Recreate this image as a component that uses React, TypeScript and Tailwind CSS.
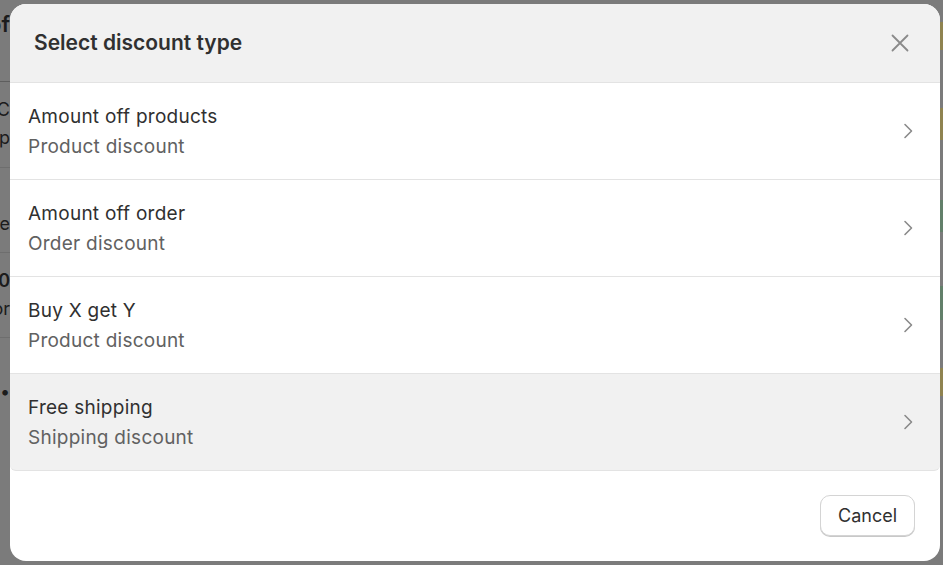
import React from "react";

const rows = [
  { title: "Amount off products", sub: "Product discount", hover: false },
  { title: "Amount off order", sub: "Order discount", hover: false },
  { title: "Buy X get Y", sub: "Product discount", hover: false },
  { title: "Free shipping", sub: "Shipping discount", hover: true },
];

function Chevron() {
  return (
    <svg width="20" height="20" viewBox="0 0 20 20" fill="none">
      <path d="M7 3.5 13.5 10 7 16.5" stroke="#8a8a8a" strokeWidth="1.6" strokeLinecap="round" strokeLinejoin="round" />
    </svg>
  );
}

function CloseIcon() {
  return (
    <svg width="22" height="22" viewBox="0 0 22 22" fill="none">
      <path d="M3.5 3.5l15 15M18.5 3.5l-15 15" stroke="#8a8a8a" strokeWidth="1.8" strokeLinecap="round" />
    </svg>
  );
}

export default function App() {
  return (
    <div className="relative w-[943px] h-[565px] overflow-hidden bg-[#7b7b7b]" style={{ fontFamily: "Inter, 'Noto Sans', sans-serif" }}>
      {/* background page fragments */}
      <div className="flex h-full">
        <div className="w-[10px] flex flex-col text-[#1c1c1c] overflow-hidden">
          <div className="h-[82px] border-b border-[#5e5e5e] flex justify-end items-start pt-[8px] text-[22px] font-semibold whitespace-nowrap pr-0">Discounts of</div>
          <div className="h-[86px] border-b border-[#6e6e6e] flex flex-col items-end pt-[14px] text-[18px] leading-[28px] whitespace-nowrap">
            <span>XYZSC</span>
            <span>Shop</span>
          </div>
          <div className="h-[85px] border-b border-[#6e6e6e] flex flex-col items-end pt-[42px] text-[18px] leading-[28px] whitespace-nowrap">
            <span>Once</span>
          </div>
          <div className="h-[85px] border-b border-[#6e6e6e] flex flex-col items-end pt-[14px] text-[18px] leading-[28px] whitespace-nowrap">
            <span className="font-semibold">100</span>
            <span>For</span>
          </div>
          <div className="flex flex-col items-end pt-[40px] text-[18px] whitespace-nowrap">
            <span>•</span>
          </div>
        </div>
        <div className="flex-1" />
        <div className="w-[3px] flex flex-col">
          <div className="h-[22px]" />
          <div className="h-[28px] bg-[#8f8350]" />
          <div className="h-[58px]" />
          <div className="h-[32px] bg-[#8f8350]" />
          <div className="h-[60px]" />
          <div className="h-[32px] bg-[#62806a]" />
          <div className="h-[54px]" />
          <div className="h-[34px] bg-[#62806a]" />
          <div className="h-[48px]" />
          <div className="h-[28px] bg-[#8f8350]" />
        </div>
      </div>

      {/* modal */}
      <div className="absolute left-[10px] top-[4px] w-[930px] h-[557px] rounded-[16px] bg-white overflow-hidden flex flex-col">
        <div className="h-[79px] shrink-0 bg-[#f1f1f1] border-b border-[#e3e3e3] pl-[24px] pr-[29px] flex items-center justify-between">
          <span className="text-[21px] font-semibold text-[#303030]">Select discount type</span>
          <CloseIcon />
        </div>
        {rows.map((r) => (
          <div
            key={r.title}
            className={
              "h-[97px] shrink-0 border-b border-[#e3e3e3] pl-[18px] pr-[22px] flex items-center justify-between " +
              (r.hover ? "bg-[#f1f1f1] rounded-b-[6px]" : "bg-white")
            }
          >
            <div className="flex flex-col tracking-[0.25px] pt-[2px]">
              <span className="text-[19px] leading-[30px] text-[#303030]">{r.title}</span>
              <span className="text-[19px] leading-[30px] text-[#616161]">{r.sub}</span>
            </div>
            <Chevron />
          </div>
        ))}
        <div className="flex-1 flex items-start justify-end pt-[24px] pr-[25px]">
          <button className="w-[95px] h-[41px] rounded-[10px] border border-[#d4d4d4] bg-white shadow-[0_1px_0_#c8c8c8] text-[18px] text-[#303030]">
            Cancel
          </button>
        </div>
      </div>
    </div>
  );
}
